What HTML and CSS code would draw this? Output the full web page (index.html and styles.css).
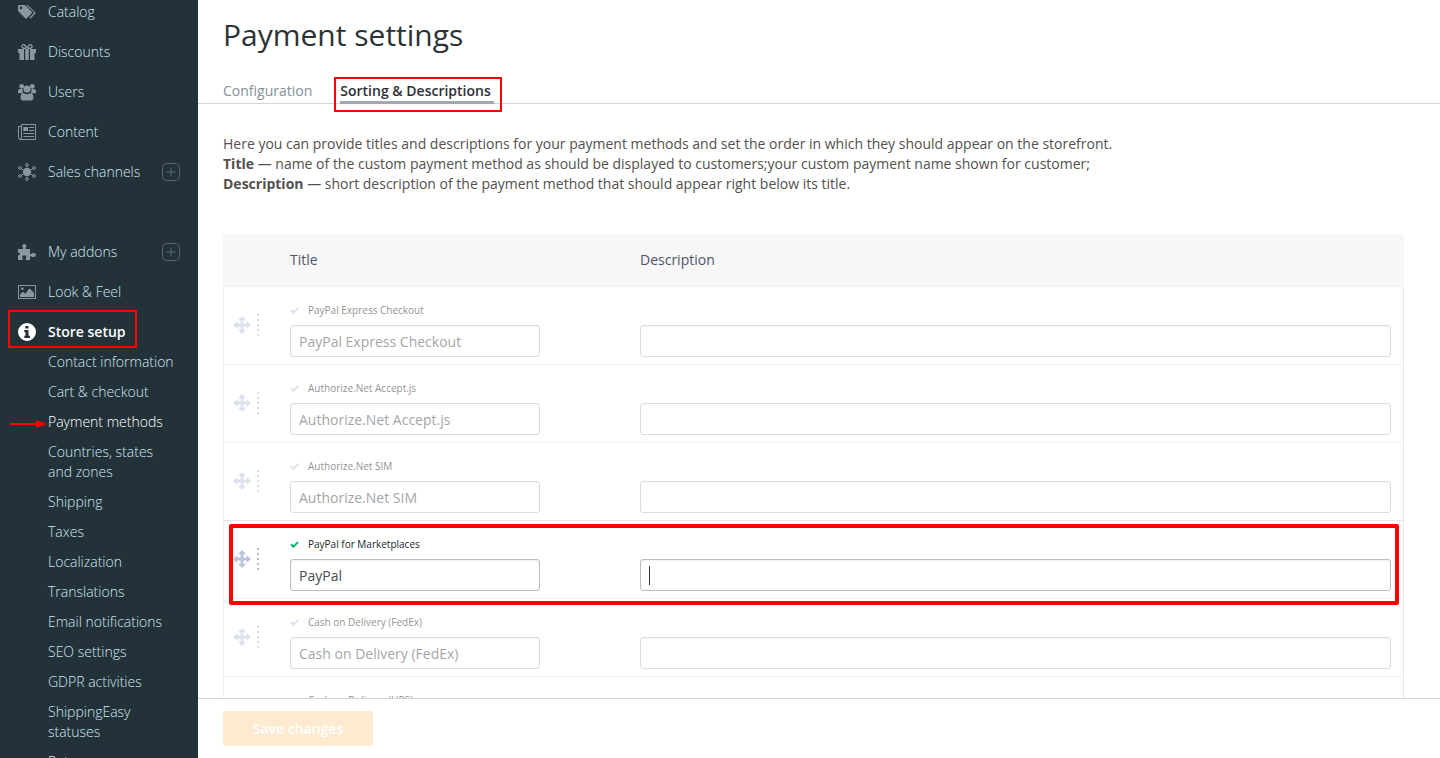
FILE: index.html
```html
<!DOCTYPE html>
<html lang="en">
<head>
<meta charset="utf-8">
<title>Payment settings</title>
<link rel="stylesheet" href="styles.css">
</head>
<body>
<svg class="sprite" aria-hidden="true">
  <symbol id="move" viewBox="0 0 18 18"><path d="M9 0l4 4.200h-2.600v3.400h3.400V5L18 9l-4.200 4v-2.600h-3.400v3.400H13L9 18l-4-4.200h2.600v-3.400H4.200V13L0 9l4.200-4v2.600h3.400V4.200H5z"/></symbol>
  <symbol id="check" viewBox="0 0 9 7"><path d="M1 3.300l2.400 2.400L8 1.100" fill="none" stroke="currentColor" stroke-width="2"/></symbol>
  <symbol id="plus" viewBox="0 0 18 18"><rect x=".5" y=".5" width="17" height="17" rx="4.500" fill="none" stroke="currentColor"/><path d="M9 4.500v9M4.500 9h9" stroke="currentColor"/></symbol>
</svg>
<div class="app">
  <aside class="sidebar">
    <nav class="nav">
      <a class="item" href="#"><svg class="icon" viewBox="0 0 18 18"><path fill-rule="evenodd" d="M0 3.400Q0 2 1.400 2H6q1 0 1.700.7l6 6q.8.800 0 1.600l-4.900 5q-.8.700-1.600 0L.7 8.800Q0 8 0 7zM3 3.600a1.300 1.300 0 100 2.600 1.300 1.300 0 000-2.600z"/><path d="M8 2h1q.8 0 1.500.7l6.700 6.500q.8.800 0 1.600l-4.800 4.900-1-.9 4.300-4.600q.5-.6 0-1.100z"/></svg><span>Catalog</span></a>
      <a class="item" href="#"><svg class="icon" viewBox="0 0 18 18"><path d="M0 6h6v4H0zM12 6h6v4h-6zM1.500 10H6v7H1.500zM12 10h4.500v7H12zM7.200 6h3.600v11H7.200z"/><path d="M8.500 5.300C5 5.800 3.500 4.500 3.900 2.900 4.600 1 7.300 1 8.700 5M9.500 5.300c3.500.5 5-.8 4.600-2.400C13.400 1 10.700 1 9.300 5" fill="none" stroke="currentColor" stroke-width="1.400"/></svg><span>Discounts</span></a>
      <a class="item" href="#"><svg class="icon" viewBox="0 0 18 18"><circle cx="3.700" cy="3.300" r="2.400"/><circle cx="14.300" cy="3.300" r="2.400"/><circle cx="9" cy="6" r="3.500"/><path d="M0 9.500V8q0-2 2-2h2.600Q4 9 5.600 10.200H1Q0 10.200 0 9.500zM18 9.500V8q0-2-2-2h-2.600q.6 3-1 4.200H17q1 0 1-.7zM2.600 14.500q0-4.200 3-4.200 3.400 2 6.800 0 3 0 3 4.200 0 3-2.500 3H5q-2.400 0-2.400-3z"/></svg><span>Users</span></a>
      <a class="item" href="#"><svg class="icon" viewBox="0 0 18 18"><path d="M3.500 1.500h14v15H2q-1.500 0-1.500-2V3.500h3M3.500 1.500V14q0 2.500-1.800 2.500" fill="none" stroke="currentColor"/><path d="M5.300 4h4.700v4H5.300zM11 4h5v1h-5zM11 7h5v1h-5zM5.300 10H16v1H5.300zM5.300 13H16v1H5.300z"/></svg><span>Content</span></a>
      <div class="item-row"><a class="item" href="#"><svg class="icon" viewBox="0 0 18 18"><circle cx="9" cy="9" r="4.200"/><g fill="none" stroke="currentColor"><path d="M9 4V3M9 14v1M5.300 7L3 5.500M12.700 7L15 5.500M5.300 11L3 12.500M12.700 11l2.300 1.500"/><circle cx="9" cy="1.900" r="1.400"/><circle cx="9" cy="16.100" r="1.400"/><circle cx="1.900" cy="5" r="1.400"/><circle cx="16.100" cy="5" r="1.400"/><circle cx="1.900" cy="13" r="1.400"/><circle cx="16.100" cy="13" r="1.400"/></g></svg><span>Sales channels</span></a><button class="add" type="button" aria-label="Add sales channel"><svg class="icon"><use href="#plus"/></svg></button></div>
      <div class="item-row spaced"><a class="item" href="#"><svg class="icon" viewBox="0 0 18 18"><path d="M0 6h4.600q.8 0 .5-.8Q4.300 3.900 4.300 3q0-2 2-2t2 2q0 .9-.8 2.200-.3.800.5.800h4v4.500q0 .8.800.5 1.200-.9 2.700-.9 2.500 0 2.500 2t-2.500 2q-1.500 0-2.700-.9-.8-.3-.8.500V17H8q-.8 0-.5-.8.700-1 .7-2 0-2-2-2t-2 2q0 1 .7 2 .3.800-.5.800H0v-4.500q2-.3 2-1.500T0 9.500z"/></svg><span>My addons</span></a><button class="add" type="button" aria-label="Add addon"><svg class="icon"><use href="#plus"/></svg></button></div>
      <a class="item" href="#"><svg class="icon" viewBox="0 0 18 18"><rect x=".5" y="2.500" width="17" height="13" fill="none" stroke="currentColor"/><circle cx="4.300" cy="5.800" r="1.300"/><path d="M2 14v-2.500l3-2.800 2.300 2 4-5.200 1.700 1.300L16 10v4z"/></svg><span>Look &amp; Feel</span></a>
      <a class="item current" href="#"><svg class="icon" viewBox="0 0 18 18"><path fill-rule="evenodd" d="M9 0a9 9 0 100 18A9 9 0 009 0zM7.300 3h3.200v2.500H7.300zM6.300 7h4.200v5.800H12V15H6.300v-2.200h1.200V9.200H6.300z"/></svg><span>Store setup</span></a>
      <ul class="submenu">
        <li><a href="#">Contact information</a></li>
        <li><a href="#">Cart &amp; checkout</a></li>
        <li class="selected"><a href="#">Payment methods</a><svg class="arrow" viewBox="0 0 37 8"><path d="M0 3h26V0l11 4-11 4V5H0z"/></svg></li>
        <li><a href="#">Countries, states and zones</a></li>
        <li><a href="#">Shipping</a></li>
        <li><a href="#">Taxes</a></li>
        <li><a href="#">Localization</a></li>
        <li><a href="#">Translations</a></li>
        <li><a href="#">Email notifications</a></li>
        <li><a href="#">SEO settings</a></li>
        <li><a href="#">GDPR activities</a></li>
        <li><a href="#">ShippingEasy statuses</a></li>
        <li><a href="#">Returns</a></li>
      </ul>
    </nav>
  </aside>
  <main class="main">
    <div class="content">
      <h1>Payment settings</h1>
      <nav class="tabs">
        <a class="tab" href="#">Configuration</a>
        <a class="tab active" href="#" aria-current="page">Sorting &amp; Descriptions</a>
      </nav>
      <div class="panel">
        <p class="intro">Here you can provide titles and descriptions for your payment methods and set the order in which they should appear on the storefront.<br><b>Title</b> — name of the custom payment method as should be displayed to customers;your custom payment name shown for customer;<br><b>Description</b> — short description of the payment method that should appear right below its title.</p>
        <table class="methods">
          <thead><tr><th class="grip-col"></th><th class="title-col">Title</th><th>Description</th></tr></thead>
          <tbody>
            <tr class="off"><td><div class="grip"><svg class="icon"><use href="#move"/></svg><i class="dots"></i></div></td><td><label for="t1"><svg class="check"><use href="#check"/></svg>PayPal Express Checkout</label><input id="t1" type="text" value="PayPal Express Checkout"></td><td class="desc"><input type="text" aria-label="PayPal Express Checkout description"></td></tr>
            <tr class="off"><td><div class="grip"><svg class="icon"><use href="#move"/></svg><i class="dots"></i></div></td><td><label for="t2"><svg class="check"><use href="#check"/></svg>Authorize.Net Accept.js</label><input id="t2" type="text" value="Authorize.Net Accept.js"></td><td class="desc"><input type="text" aria-label="Authorize.Net Accept.js description"></td></tr>
            <tr class="off"><td><div class="grip"><svg class="icon"><use href="#move"/></svg><i class="dots"></i></div></td><td><label for="t3"><svg class="check"><use href="#check"/></svg>Authorize.Net SIM</label><input id="t3" type="text" value="Authorize.Net SIM"></td><td class="desc"><input type="text" aria-label="Authorize.Net SIM description"></td></tr>
            <tr class="on"><td><div class="grip"><svg class="icon"><use href="#move"/></svg><i class="dots"></i></div></td><td><label for="t4"><svg class="check"><use href="#check"/></svg>PayPal for Marketplaces</label><input id="t4" type="text" value="PayPal"></td><td class="desc"><div class="field"><input type="text" aria-label="PayPal for Marketplaces description"><i class="caret"></i></div></td></tr>
            <tr class="off"><td><div class="grip"><svg class="icon"><use href="#move"/></svg><i class="dots"></i></div></td><td><label for="t5"><svg class="check"><use href="#check"/></svg>Cash on Delivery (FedEx)</label><input id="t5" type="text" value="Cash on Delivery (FedEx)"></td><td class="desc"><input type="text" aria-label="Cash on Delivery (FedEx) description"></td></tr>
            <tr class="off"><td><div class="grip"><svg class="icon"><use href="#move"/></svg><i class="dots"></i></div></td><td><label for="t6"><svg class="check"><use href="#check"/></svg>Cash on Delivery (UPS)</label><input id="t6" type="text" value="Cash on Delivery (UPS)"></td><td class="desc"><input type="text" aria-label="Cash on Delivery (UPS) description"></td></tr>
          </tbody>
        </table>
      </div>
    </div>
    <footer class="actions"><button class="save" type="button">Save changes</button></footer>
  </main>
</div>
</body>
</html>
```
FILE: styles.css
```css
*, *::before, *::after { box-sizing: border-box; }
body { margin: 0; font: 14px/20px "Open Sans", "Noto Sans", sans-serif; color: #53504f; background: #fff; }
a { color: inherit; text-decoration: none; }
.sprite { position: absolute; width: 0; height: 0; }
.icon { width: 18px; height: 18px; flex: none; display: block; fill: currentColor; }
.app { display: grid; grid-template-columns: 198px minmax(0, 1fr); height: 100vh; overflow: hidden; }

.sidebar { background: #233239; color: #cfe6f3; font-weight: 300; overflow: hidden; }
.nav { margin-top: -8px; }
.item { position: relative; display: flex; align-items: center; gap: 12px; height: 40px; padding-left: 18px; }
.item .icon { color: #8a979f; }
.item-row { display: flex; align-items: center; justify-content: space-between; padding-right: 18px; }
.spaced { margin-top: 40px; }
.add { padding: 0; border: 0; background: none; color: #596870; }
.current { color: #fff; font-weight: 600; }
.current .icon { color: #fff; }
.current::after { content: ""; position: absolute; left: 8px; top: -2px; width: 129px; height: 38px; border: 2px solid #f00; }
.submenu { list-style: none; margin: 0; padding: 0 20px 0 48px; }
.submenu li { position: relative; padding-bottom: 10px; }
.submenu a { display: block; }
.selected { color: #fff; }
.arrow { position: absolute; left: -38px; top: 8px; width: 37px; height: 8px; fill: #f00; }

.main { display: flex; flex-direction: column; min-width: 0; min-height: 0; }
.content { flex: 1; min-height: 0; overflow: hidden; }
h1 { margin: 0; padding: 15px 25px 0; font-size: 30px; line-height: 40px; font-weight: 400; color: #2c3234; }
.tabs { display: flex; gap: 28px; padding: 26px 25px 0; border-bottom: 1px solid #d3d5d7; }
.tab { position: relative; padding-bottom: 2px; color: #82919b; }
.active { color: #2e3038; font-weight: 600; padding-right: 3px; }
.active::before { content: ""; position: absolute; left: 0; right: 0; bottom: -1px; height: 3px; background: #a0a9af; }
.active::after { content: ""; position: absolute; left: -6px; right: -8px; top: -4px; height: 35px; border: 2px solid #f00; }
.panel { padding: 30px 36px 0 25px; }
.intro { margin: 0 0 40px; }

.methods { width: 100%; border-spacing: 0; table-layout: fixed; }
.methods th { height: 52px; padding: 0; background: #f7f7f7; color: #4d5568; font-weight: 400; text-align: left; }
.grip-col { width: 67px; }
.title-col { width: 350px; }
.methods td { height: 78px; padding: 13px 0 7px; border-top: 1px solid #f2f2f2; vertical-align: bottom; }
.methods td:first-child { padding: 0 0 2px 9px; vertical-align: middle; border-left: 1px solid #f0f0f0; }
.methods td:last-child { padding-right: 12px; border-right: 1px solid #e8e8e8; }
.grip { display: flex; align-items: center; gap: 6px; color: #bac5dc; }
.dots { width: 2px; height: 22px; background: repeating-linear-gradient(#b4b7bc 0 2px, transparent 2px 5px); }
.methods label { display: flex; align-items: center; gap: 9px; margin-bottom: 5px; font-size: 10px; line-height: 20px; color: #25262b; }
.check { width: 9px; height: 7px; color: #00b865; }
.methods input { display: block; width: 250px; height: 32px; padding: 0 8px; border: 1px solid #bdbdbd; border-radius: 3px; background: #fff; box-shadow: inset 0 1px 2px #eee; font: inherit; color: #4b4b4b; }
.methods .desc input { width: 100%; }
.off .grip, .off label, .off input { opacity: .5; }
.off .check { color: #bac5dc; }
.on { position: relative; }
.on td { border-top-color: #e6e6e6; }
.on td:last-child::after { content: ""; position: absolute; left: 6px; right: 5px; top: 4px; height: 81px; border: 4px solid #f00; border-radius: 2px; pointer-events: none; }
.field { position: relative; }
.caret { position: absolute; left: 9px; top: 7px; width: 1px; height: 19px; background: #333; }

.actions { padding: 12px 25px; border-top: 1px solid #d5d5d5; background: #fff; }
.save { display: block; width: 150px; height: 35px; border: 0; border-radius: 3px; background: #feeacf; color: #fff; font: inherit; font-weight: 600; }
```
